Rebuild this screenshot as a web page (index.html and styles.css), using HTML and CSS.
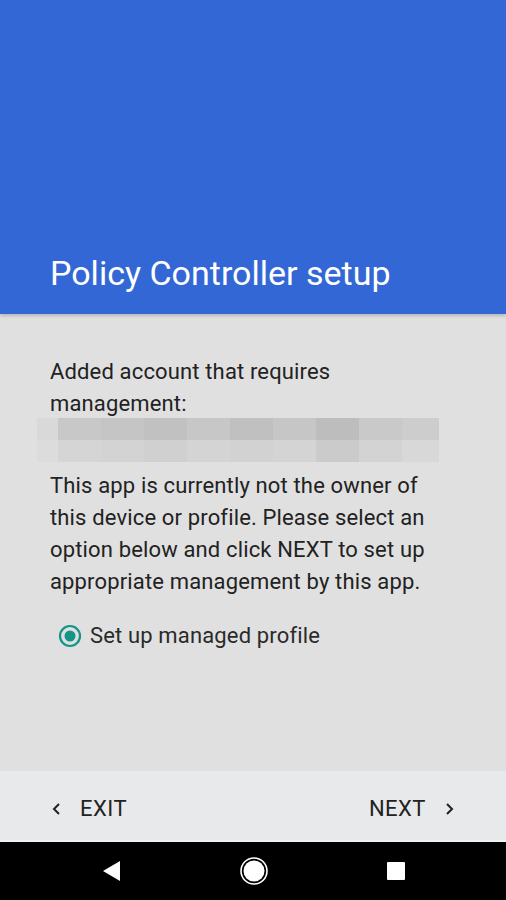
FILE: index.html
```html
<!DOCTYPE html>
<html>
<head>
<meta charset="utf-8">
<link rel="stylesheet" href="styles.css">
</head>
<body>
<div class="screen">
  <header class="header">
    <h1 class="title">Policy Controller setup</h1>
  </header>
  <main class="content">
    <p class="intro">Added account that requires management:</p>
    <div class="blur">
      <div class="blur-row">
        <span class="c0"></span><span class="c1"></span><span class="c2"></span><span class="c3"></span><span class="c4"></span><span class="c5"></span><span class="c6"></span><span class="c7"></span><span class="c8"></span><span class="c9"></span>
      </div>
      <div class="blur-row low">
        <span class="c0"></span><span class="c1"></span><span class="c2"></span><span class="c3"></span><span class="c4"></span><span class="c5"></span><span class="c6"></span><span class="c7"></span><span class="c8"></span><span class="c9"></span>
      </div>
    </div>
    <p class="desc">This app is currently not the owner of this device or profile. Please select an option below and click NEXT to set up appropriate management by this app.</p>
    <label class="radio">
      <svg class="radio-icon" width="24" height="24" viewBox="0 0 24 24"><circle cx="12" cy="12" r="10" fill="none" stroke="#139486" stroke-width="2.2"/><circle cx="12" cy="12" r="5.5" fill="#139486"/></svg>
      <span>Set up managed profile</span>
    </label>
  </main>
  <footer class="footer">
    <div class="btn">
      <svg width="14" height="14" viewBox="0 0 14 14"><path d="M9 2 L4 7 L9 12" fill="none" stroke="#222" stroke-width="2"/></svg>
      <span class="btn-exit">EXIT</span>
    </div>
    <div class="btn">
      <span class="btn-next">NEXT</span>
      <svg width="14" height="14" viewBox="0 0 14 14"><path d="M5 2 L10 7 L5 12" fill="none" stroke="#222" stroke-width="2"/></svg>
    </div>
  </footer>
  <nav class="navbar">
    <svg width="20" height="22" viewBox="0 0 20 22"><path d="M18 1 L18 21 L1 11 Z" fill="#fff"/></svg>
    <svg width="30" height="30" viewBox="0 0 30 30"><circle cx="15" cy="15" r="13" fill="none" stroke="#fff" stroke-width="1.6"/><circle cx="15" cy="15" r="10.5" fill="#fff"/></svg>
    <svg width="18" height="18" viewBox="0 0 18 18"><rect x="0" y="0" width="18" height="18" rx="1" fill="#fff"/></svg>
  </nav>
</div>
</body>
</html>
```
FILE: styles.css
```css
* { box-sizing: border-box; }
html, body { margin: 0; padding: 0; }
body {
  font-family: Roboto, "Noto Sans", sans-serif;
  background: #e0e0e0;
}
.screen {
  width: 506px;
  height: 900px;
  display: flex;
  flex-direction: column;
}
.header {
  height: 314px;
  background: #3367d6;
  display: flex;
  align-items: flex-end;
  padding: 0 50px 21px;
  box-shadow: 0 2px 3px rgba(0,0,0,0.18);
  position: relative;
  z-index: 1;
}
.title {
  margin: 0;
  color: #fff;
  font-weight: 400;
  font-size: 34px;
  line-height: 40px;
}
.content {
  flex: 1;
  padding: 42px 50px 0;
  color: #222;
  font-size: 22px;
  line-height: 32px;
  letter-spacing: 0.15px;
}
.intro {
  margin: 0;
}
.blur {
  margin: -2px 0 0 -13px;
  width: 402px;
  display: flex;
  flex-direction: column;
}
.blur-row {
  display: grid;
  grid-template-columns: 21px repeat(8, 43px) 37px;
  height: 22px;
}
.blur-row span { display: block; }
.c0 { background: #d9d9d9; }
.c1 { background: #c8c8c8; }
.c2 { background: #c5c5c5; }
.c3 { background: #c1c1c1; }
.c4 { background: #c7c7c7; }
.c5 { background: #c0c0c0; }
.c6 { background: #c6c6c6; }
.c7 { background: #bdbdbd; }
.c8 { background: #c9c9c9; }
.c9 { background: #cdcdcd; }
.low .c0 { background: #dcdcdc; }
.low .c1 { background: #d5d5d5; }
.low .c2 { background: #d3d3d3; }
.low .c3 { background: #d0d0d0; }
.low .c4 { background: #d4d4d4; }
.low .c5 { background: #d2d2d2; }
.low .c6 { background: #d4d4d4; }
.low .c7 { background: #cbcbcb; }
.low .c8 { background: #d3d3d3; }
.low .c9 { background: #d8d8d8; }
.desc {
  margin: 8px 0 0;
}
.radio {
  margin-top: 22px;
  display: flex;
  align-items: center;
  gap: 8px;
  padding-left: 8px;
  color: #2a2a2a;
}
.radio-icon { flex: none; }
.footer {
  height: 71px;
  background: #e8e9ea;
  display: flex;
  justify-content: space-between;
  align-items: center;
  padding: 6px 50px 0;
  border-bottom: 2px solid #f2f2f2;
  font-size: 22px;
  letter-spacing: 0.5px;
  color: #222;
}
.btn {
  display: flex;
  align-items: center;
  gap: 16px;
}
.navbar {
  height: 58px;
  background: #000;
  display: flex;
  justify-content: center;
  align-items: center;
  gap: 117.5px;
}
```
